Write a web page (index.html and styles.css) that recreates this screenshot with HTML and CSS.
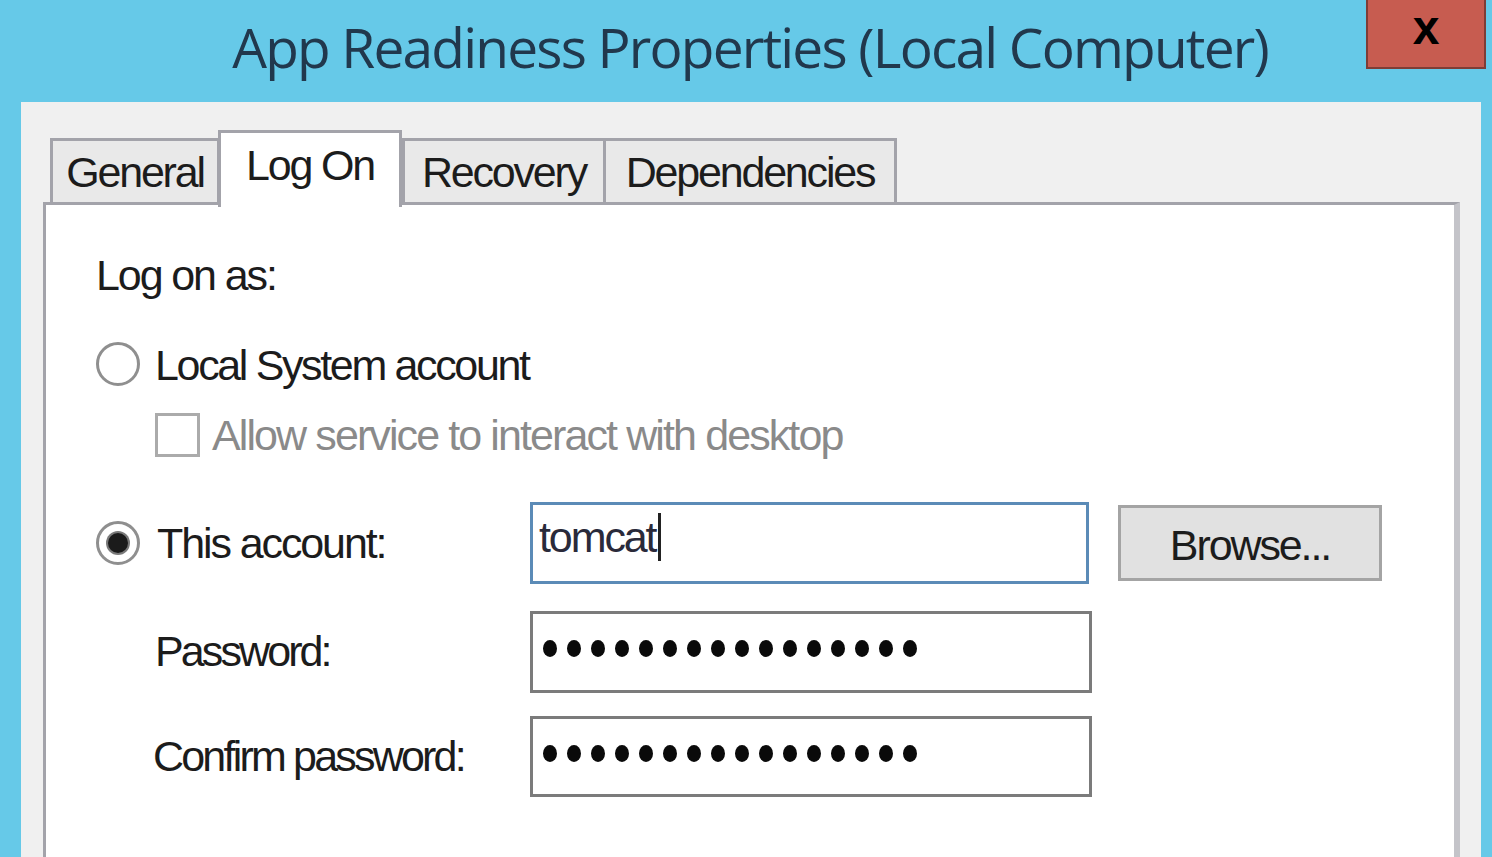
FILE: index.html
```html
<!DOCTYPE html>
<html>
<head>
<meta charset="utf-8">
<title>App Readiness Properties</title>
<link rel="stylesheet" href="styles.css">
</head>
<body>
<div class="window">
  <div class="titlebar">
    <div class="title">App Readiness Properties (Local Computer)</div>
    <div class="close"><span class="close-x">x</span></div>
  </div>
  <div class="dialog">
    <div class="tabs">
      <div class="tab t-general">General</div>
      <div class="tab active t-logon">Log On</div>
      <div class="tab t-recovery">Recovery</div>
      <div class="tab t-deps">Dependencies</div>
    </div>
    <div class="panel">
      <div class="logon-as">Log on as:</div>
      <div class="row r-local">
        <span class="radio"></span>
        <span class="lbl lbl-local">Local System account</span>
      </div>
      <div class="row r-check">
        <span class="checkbox"></span>
        <span class="lbl disabled">Allow service to interact with desktop</span>
      </div>
      <div class="acct-row r-this">
        <div class="cell-label">
          <span class="radio checked"></span>
          <span class="lbl lbl-this">This account:</span>
        </div>
        <div class="input focus"><span class="value">tomcat</span><span class="caret"></span></div>
        <div class="btn">Browse...</div>
      </div>
      <div class="acct-row r-pass">
        <div class="cell-label pad-pass">Password:</div>
        <div class="input wide masked">
          <div class="dots">
            <span></span><span></span><span></span><span></span><span></span><span></span><span></span><span></span>
            <span></span><span></span><span></span><span></span><span></span><span></span><span></span><span></span>
          </div>
        </div>
      </div>
      <div class="acct-row r-confirm">
        <div class="cell-label pad-confirm">Confirm password:</div>
        <div class="input wide masked confirm">
          <div class="dots">
            <span></span><span></span><span></span><span></span><span></span><span></span><span></span><span></span>
            <span></span><span></span><span></span><span></span><span></span><span></span><span></span><span></span>
          </div>
        </div>
      </div>
    </div>
  </div>
</div>
</body>
</html>
```
FILE: styles.css
```css
html, body {
  margin: 0;
  padding: 0;
}
body {
  background: #66c9e8;
  font-family: "Liberation Sans", Arial, sans-serif;
  color: #1c1c1c;
}
.window {
  width: 1492px;
  height: 857px;
  display: flex;
  flex-direction: column;
  overflow: hidden;
  background: #66c9e8;
}
.titlebar {
  height: 102px;
  flex-shrink: 0;
  display: flex;
}
.title {
  flex: 1;
  padding-left: 134px;
  margin-top: 19px;
  text-align: center;
  font-family: "Open Sans", sans-serif;
  font-size: 55px;
  line-height: 55px;
  letter-spacing: -1.8px;
  color: #21384d;
  white-space: nowrap;
}
.close {
  width: 120px;
  height: 69px;
  margin-right: 6px;
  box-sizing: border-box;
  background: #c75c50;
  border: 2px solid #7e3d36;
  border-top: none;
  display: flex;
  justify-content: center;
  align-items: flex-start;
  padding-top: 4px;
}
.close-x {
  font-family: "Liberation Sans", Arial, sans-serif;
  font-weight: bold;
  font-size: 48px;
  line-height: 48px;
  color: #000;
}
.dialog {
  margin-left: 21px;
  width: 1460px;
  flex: 1;
  background: #f0f0f0;
  display: flex;
  flex-direction: column;
  padding-top: 28px;
  box-sizing: border-box;
}
.tabs {
  display: flex;
  align-items: flex-end;
  height: 72px;
  margin-left: 29px;
  flex-shrink: 0;
}
.tab {
  box-sizing: border-box;
  height: 64px;
  border: 3px solid #a3a3aa;
  border-bottom: none;
  background: #e9e9e9;
  text-align: center;
  font-size: 43px;
  line-height: 48px;
  letter-spacing: -2.2px;
  padding-top: 7px;
  white-space: nowrap;
}
.t-general { width: 170px; }
.t-logon { width: 184px; margin-left: -2px; }
.t-recovery { width: 204px; }
.t-deps { width: 294px; margin-left: -3px; }
.tab.active {
  height: 77px;
  margin-bottom: -5px;
  padding-top: 8px;
  background: #fff;
  position: relative;
  z-index: 1;
}
.panel {
  margin-left: 22px;
  width: 1417px;
  flex: 1;
  box-sizing: border-box;
  background: #fff;
  border-left: 3px solid #a3a3aa;
  border-top: 3px solid #a3a3aa;
  border-right: 6px solid #c4c4c9;
  padding-left: 50px;
  padding-top: 46px;
  font-size: 43px;
  line-height: 48px;
  letter-spacing: -2.1px;
}
.logon-as {
  height: 48px;
}
.row {
  display: flex;
  align-items: center;
  height: 44px;
}
.r-local { margin-top: 43px; }
.r-check { margin-top: 27px; padding-left: 59px; }
.radio {
  width: 44px;
  height: 44px;
  box-sizing: border-box;
  border: 3px solid #8f8f8f;
  border-radius: 50%;
  background: #fff;
  flex-shrink: 0;
  display: flex;
  align-items: center;
  justify-content: center;
}
.radio.checked::after {
  content: "";
  width: 20px;
  height: 20px;
  border-radius: 50%;
  background: #1b1b1b;
  box-shadow: 0 0 0 2px #7a7a7a;
}
.lbl-local { margin-left: 15px; padding-top: 2px; letter-spacing: -2.35px; }
.checkbox {
  width: 45px;
  height: 44px;
  box-sizing: border-box;
  border: 3px solid #ababab;
  background: #fff;
  flex-shrink: 0;
}
.r-check .lbl { margin-left: 12px; letter-spacing: -1.9px; }
.disabled { color: #8a8a8a; }
.acct-row {
  display: flex;
  align-items: center;
}
.r-this { margin-top: 45px; height: 82px; }
.r-pass { margin-top: 27px; height: 82px; }
.r-confirm { margin-top: 23px; height: 81px; }
.cell-label {
  width: 434px;
  flex-shrink: 0;
  display: flex;
  align-items: center;
  white-space: nowrap;
}
.lbl-this { margin-left: 17px; }
.pad-pass { padding-left: 59px; box-sizing: border-box; padding-bottom: 2px; letter-spacing: -2.9px; }
.pad-confirm { padding-left: 57px; box-sizing: border-box; padding-bottom: 2px; letter-spacing: -2.8px; }
.input {
  box-sizing: border-box;
  width: 559px;
  height: 82px;
  border: 3px solid #7b7b7b;
  background: #fff;
  display: flex;
  flex-shrink: 0;
}
.input.focus {
  border-color: #5b8bb7;
  padding-left: 6px;
  padding-top: 8px;
  align-items: flex-start;
}
.value {
  color: #2a2a3a;
}
.caret {
  display: inline-block;
  width: 3px;
  height: 48px;
  background: #222;
  margin-left: 3px;
}
.input.wide {
  width: 562px;
}
.input.masked {
  align-items: center;
  padding-left: 10px;
  padding-bottom: 8px;
}
.input.confirm {
  height: 81px;
  padding-bottom: 7px;
}
.dots {
  display: flex;
  gap: 10px;
}
.dots span {
  width: 14px;
  height: 17px;
  border-radius: 50%;
  background: #0a0a0a;
}
.btn {
  box-sizing: border-box;
  margin-left: 29px;
  width: 264px;
  height: 76px;
  background: #e1e1e1;
  border: 3px solid #a4a4a4;
  display: flex;
  align-items: center;
  justify-content: center;
  flex-shrink: 0;
  padding-top: 4px;
}
```
